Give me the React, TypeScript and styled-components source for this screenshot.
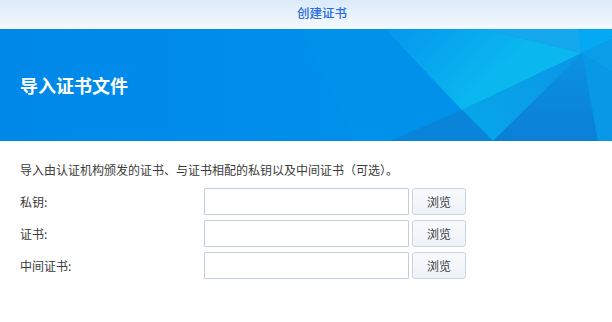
import React from "react";
import styled, { createGlobalStyle } from "styled-components";

const Global = createGlobalStyle`
  html, body { margin: 0; padding: 0; background: #ffffff; }
  body { font-family: "Noto Sans CJK SC", "Liberation Sans", sans-serif; }
  * { box-sizing: border-box; }
`;

const Page = styled.div`
  width: 612px;
  height: 322px;
  display: flex;
  flex-direction: column;
  background: #fff;
  overflow: hidden;
`;

const TitleBar = styled.div`
  height: 29px;
  flex: none;
  display: flex;
  align-items: center;
  justify-content: center;
  padding-left: 32px;
  background: linear-gradient(180deg, #dbeaf9 0%, #f4f9fe 100%);
`;

const Title = styled.div`
  font-size: 12.5px;
  font-weight: 500;
  color: #2a6ce0;
  line-height: 1;
  margin-top: -2px;
`;

const Banner = styled.div`
  position: relative;
  height: 112px;
  flex: none;
  background: #008ae8;
  display: flex;
  align-items: center;
  padding: 0 20px 0;
  overflow: hidden;
`;

const BannerArt = styled.svg`
  position: absolute;
  left: 0;
  top: 0;
  width: 612px;
  height: 112px;
`;

const Heading = styled.h1`
  position: relative;
  margin: 0;
  font-size: 18px;
  font-weight: 700;
  color: #ffffff;
  line-height: 1;
`;

const Body = styled.div`
  padding: 21px 20px 0;
  display: flex;
  flex-direction: column;
  gap: 10px;
`;

const Intro = styled.p`
  margin: 0;
  font-size: 12px;
  color: #3b3b3b;
  line-height: 16px;
`;

const Form = styled.div`
  display: grid;
  grid-template-columns: 181px 205px 54px;
  column-gap: 3px;
  row-gap: 5px;
  align-items: center;
`;

const Label = styled.label`
  font-size: 12px;
  color: #3b3b3b;
  line-height: 16px;
  margin-top: 1px;
`;

const Input = styled.input`
  height: 27px;
  width: 205px;
  border: 1px solid #c3cedb;
  border-radius: 1px;
  background: #fff;
  margin: 0;
  padding: 0 6px;
  outline: none;
`;

const Button = styled.button`
  height: 27px;
  width: 54px;
  border: 1px solid #cad5e1;
  border-radius: 3px;
  background: linear-gradient(180deg, #f8fafc 0%, #eef3f8 100%);
  font-family: "Noto Sans CJK SC", "Liberation Sans", sans-serif;
  font-size: 12px;
  color: #3b3b3b;
  padding: 0;
  margin: 0;
`;

const rows = ["私钥:", "证书:", "中间证书:"];

export default function App() {
  return (
    <Page>
      <Global />
      <TitleBar>
        <Title>创建证书</Title>
      </TitleBar>
      <Banner>
        <BannerArt viewBox="0 0 612 112" preserveAspectRatio="none">
          <defs>
            <linearGradient id="gLight" x1="385" y1="0" x2="462" y2="81" gradientUnits="userSpaceOnUse">
              <stop offset="0" stopColor="#0596ee" />
              <stop offset="1" stopColor="#0ab8ef" />
            </linearGradient>
            <linearGradient id="gMid" x1="582" y1="24" x2="462" y2="81" gradientUnits="userSpaceOnUse">
              <stop offset="0" stopColor="#0a96e6" />
              <stop offset="1" stopColor="#07a6ea" />
            </linearGradient>
            <linearGradient id="gDeep" x1="0" y1="24" x2="0" y2="112" gradientUnits="userSpaceOnUse">
              <stop offset="0" stopColor="#0c92e2" />
              <stop offset="1" stopColor="#0a7fd6" />
            </linearGradient>
            <linearGradient id="gBase" x1="0" y1="0" x2="612" y2="0" gradientUnits="userSpaceOnUse">
              <stop offset="0" stopColor="#0088e8" />
              <stop offset="0.5" stopColor="#008eeb" />
              <stop offset="1" stopColor="#0090ea" />
            </linearGradient>
          </defs>
          <rect x="0" y="0" width="612" height="112" fill="url(#gBase)" />
          <polygon points="301,0 385,0 462,81 390,112 355,112" fill="#0091ea" />
          <polygon points="385,0 484,0 582,24 462,81" fill="url(#gLight)" />
          <polygon points="484,0 578,0 582,24" fill="#15a8ec" />
          <polygon points="578,0 612,0 612,10 582,24" fill="#03a9f2" />
          <polygon points="582,24 612,10 612,43" fill="#0a9de8" />
          <polygon points="582,24 462,81 493,112" fill="url(#gMid)" />
          <polygon points="390,112 462,81 493,112" fill="#0a84d8" />
          <polygon points="582,24 493,112 598,112" fill="url(#gDeep)" />
          <polygon points="582,24 612,43 612,112 598,112" fill="#0898e6" />
        </BannerArt>
        <Heading>导入证书文件</Heading>
      </Banner>
      <Body>
        <Intro>导入由认证机构颁发的证书、与证书相配的私钥以及中间证书（可选）。</Intro>
        <Form>
          {rows.map((r) => (
            <React.Fragment key={r}>
              <Label>{r}</Label>
              <Input type="text" />
              <Button type="button">浏览</Button>
            </React.Fragment>
          ))}
        </Form>
      </Body>
    </Page>
  );
}
